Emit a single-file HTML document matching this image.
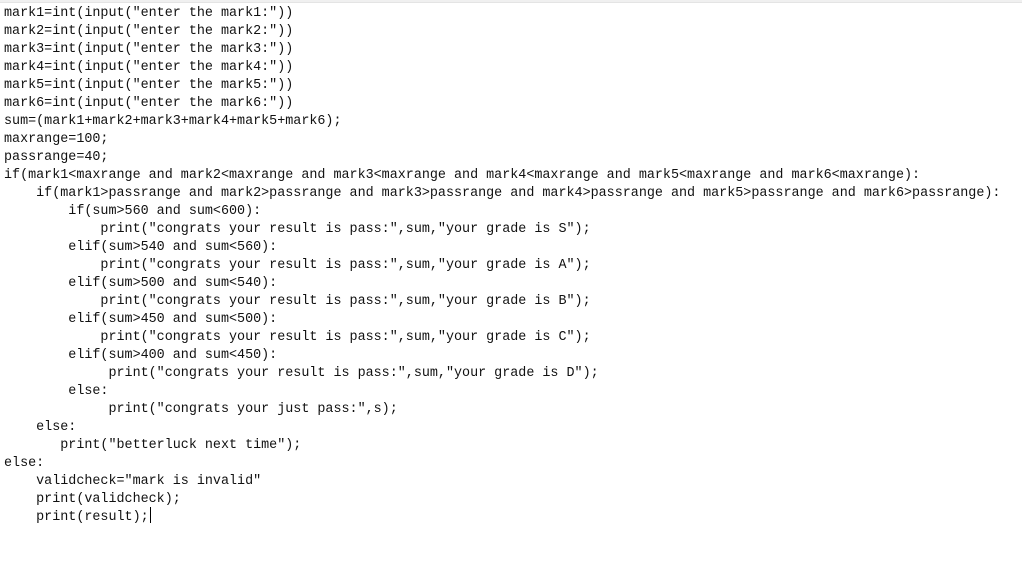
<!DOCTYPE html>
<html><head><style>
html,body{margin:0;padding:0;background:#fff;width:1022px;height:562px;overflow:hidden}
.top{position:absolute;left:0;top:0;width:1022px;height:3px;background:#f0f0f0;border-bottom:1px solid #e4e4e4;box-sizing:border-box}
pre{position:absolute;left:4px;top:5px;margin:0;font-family:"Liberation Mono",monospace;font-size:13.4px;line-height:18px;color:#111}
.cur{position:relative;display:inline-block;width:0;height:0}
.cur:after{content:"";position:absolute;left:1px;top:-13px;width:1px;height:16px;background:#000}
</style></head><body>
<div class="top"></div>
<pre>mark1=int(input("enter the mark1:"))
mark2=int(input("enter the mark2:"))
mark3=int(input("enter the mark3:"))
mark4=int(input("enter the mark4:"))
mark5=int(input("enter the mark5:"))
mark6=int(input("enter the mark6:"))
sum=(mark1+mark2+mark3+mark4+mark5+mark6);
maxrange=100;
passrange=40;
if(mark1&lt;maxrange and mark2&lt;maxrange and mark3&lt;maxrange and mark4&lt;maxrange and mark5&lt;maxrange and mark6&lt;maxrange):
    if(mark1&gt;passrange and mark2&gt;passrange and mark3&gt;passrange and mark4&gt;passrange and mark5&gt;passrange and mark6&gt;passrange):
        if(sum&gt;560 and sum&lt;600):
            print("congrats your result is pass:",sum,"your grade is S");
        elif(sum&gt;540 and sum&lt;560):
            print("congrats your result is pass:",sum,"your grade is A");
        elif(sum&gt;500 and sum&lt;540):
            print("congrats your result is pass:",sum,"your grade is B");
        elif(sum&gt;450 and sum&lt;500):
            print("congrats your result is pass:",sum,"your grade is C");
        elif(sum&gt;400 and sum&lt;450):
             print("congrats your result is pass:",sum,"your grade is D");
        else:
             print("congrats your just pass:",s);
    else:
       print("betterluck next time");
else:
    validcheck="mark is invalid"
    print(validcheck);
    print(result);<span class="cur"></span></pre>
</body></html>
